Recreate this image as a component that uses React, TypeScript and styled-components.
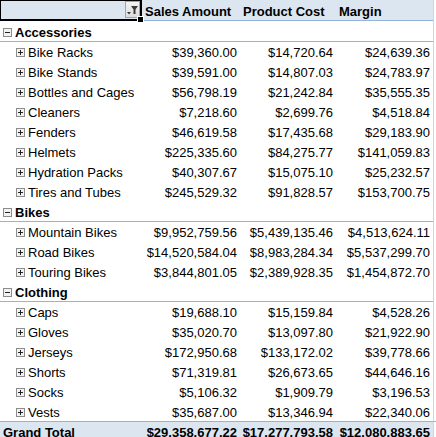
import React from 'react'
import styled, { createGlobalStyle, css } from 'styled-components'

type RowKind = 'category' | 'item'

interface PivotRow {
  kind: RowKind
  label: string
  sales?: string
  cost?: string
  margin?: string
}

const ROWS: PivotRow[] = [
  { kind: 'category', label: 'Accessories' },
  { kind: 'item', label: 'Bike Racks', sales: '$39,360.00', cost: '$14,720.64', margin: '$24,639.36' },
  { kind: 'item', label: 'Bike Stands', sales: '$39,591.00', cost: '$14,807.03', margin: '$24,783.97' },
  { kind: 'item', label: 'Bottles and Cages', sales: '$56,798.19', cost: '$21,242.84', margin: '$35,555.35' },
  { kind: 'item', label: 'Cleaners', sales: '$7,218.60', cost: '$2,699.76', margin: '$4,518.84' },
  { kind: 'item', label: 'Fenders', sales: '$46,619.58', cost: '$17,435.68', margin: '$29,183.90' },
  { kind: 'item', label: 'Helmets', sales: '$225,335.60', cost: '$84,275.77', margin: '$141,059.83' },
  { kind: 'item', label: 'Hydration Packs', sales: '$40,307.67', cost: '$15,075.10', margin: '$25,232.57' },
  { kind: 'item', label: 'Tires and Tubes', sales: '$245,529.32', cost: '$91,828.57', margin: '$153,700.75' },
  { kind: 'category', label: 'Bikes' },
  { kind: 'item', label: 'Mountain Bikes', sales: '$9,952,759.56', cost: '$5,439,135.46', margin: '$4,513,624.11' },
  { kind: 'item', label: 'Road Bikes', sales: '$14,520,584.04', cost: '$8,983,284.34', margin: '$5,537,299.70' },
  { kind: 'item', label: 'Touring Bikes', sales: '$3,844,801.05', cost: '$2,389,928.35', margin: '$1,454,872.70' },
  { kind: 'category', label: 'Clothing' },
  { kind: 'item', label: 'Caps', sales: '$19,688.10', cost: '$15,159.84', margin: '$4,528.26' },
  { kind: 'item', label: 'Gloves', sales: '$35,020.70', cost: '$13,097.80', margin: '$21,922.90' },
  { kind: 'item', label: 'Jerseys', sales: '$172,950.68', cost: '$133,172.02', margin: '$39,778.66' },
  { kind: 'item', label: 'Shorts', sales: '$71,319.81', cost: '$26,673.65', margin: '$44,646.16' },
  { kind: 'item', label: 'Socks', sales: '$5,106.32', cost: '$1,909.79', margin: '$3,196.53' },
  { kind: 'item', label: 'Vests', sales: '$35,687.00', cost: '$13,346.94', margin: '$22,340.06' },
]

const GlobalStyle = createGlobalStyle`
  html, body {
    margin: 0;
    padding: 0;
    background: #ffffff;
    overflow: hidden;
  }
  body {
    font-family: "Liberation Sans", Arial, sans-serif;
    font-size: 13px;
    color: #000000;
  }
`

const Sheet = styled.div`
  width: 436px;
  height: 437px;
  overflow: hidden;
  position: relative;
`

// Excel-ish rows: 20px each, text sits low in the cell
const Row = styled.div<{ $kind: 'header' | RowKind | 'total' }>`
  display: grid;
  grid-template-columns: 142px 98px 96px 97px 3px;
  height: 20px;
  box-sizing: border-box;
  line-height: 17px;

  ${({ $kind }) =>
    $kind === 'header' &&
    css`
      height: 21px;
      font-weight: 700;
    `}
  ${({ $kind }) =>
    ($kind === 'category' || $kind === 'total') &&
    css`
      font-weight: 700;
    `}
`

const Cell = styled.div<{ $align?: 'left' | 'right'; $band?: 'header' | 'category' | 'total' }>`
  position: relative;
  box-sizing: border-box;
  white-space: nowrap;
  text-align: ${({ $align }) => ($align === 'right' ? 'right' : 'left')};
  padding: ${({ $align }) => ($align === 'right' ? '3px 3px 0 0' : '3px 0 0 3px')};

  ${({ $band }) =>
    $band === 'header' &&
    css`
      background: #dce6f1;
      border-bottom: 1px solid #95b3d7;
    `}
  ${({ $band }) =>
    $band === 'category' &&
    css`
      border-bottom: 1px solid #95b3d7;
    `}
  ${({ $band }) =>
    $band === 'total' &&
    css`
      background: #dce6f1;
      border-top: 1px solid #95b3d7;
      padding-top: 2px;
    `}
`

const Edge = styled.div<{ $band?: 'total' }>`
  border-left: 1px solid #d4d4d4;
  box-sizing: border-box;
  ${({ $band }) =>
    $band === 'total' &&
    css`
      border-top: 1px solid #95b3d7;
    `}
`

const SelectedCell = styled.div`
  position: relative;
  box-sizing: border-box;
  background: #dce6f1;
  border: 2px solid #000000;
  border-left-width: 1px;
  border-top-width: 1px;
  height: 21px;
`

const FillHandle = styled.span`
  position: absolute;
  right: -4px;
  bottom: -4px;
  width: 5px;
  height: 5px;
  background: #000000;
  border: 1px solid #ffffff;
  z-index: 2;
`

const FilterButton = styled.span`
  position: absolute;
  right: 0;
  top: 0;
  width: 15px;
  height: 17px;
  box-sizing: border-box;
  border: 1px solid #a5a5a5;
  background: linear-gradient(#f4f4f4, #dcdcdc);
  display: flex;
  align-items: center;
  justify-content: center;
`

const Label = styled.span<{ $indent: number }>`
  display: inline-flex;
  align-items: center;
  padding-left: ${({ $indent }) => $indent}px;
  gap: 2px;
`

const Toggle = styled.span`
  display: inline-flex;
  width: 9px;
  height: 9px;
  margin-right: 1px;
`

const ToggleIcon: React.FC<{ open: boolean }> = ({ open }) => (
  <Toggle>
    <svg width="9" height="9" viewBox="0 0 9 9">
      <rect x="0.5" y="0.5" width="8" height="8" fill="#f2f2f2" stroke="#8c8c8c" />
      <line x1="2" y1="4.5" x2="7" y2="4.5" stroke="#222" />
      {!open && <line x1="4.5" y1="2" x2="4.5" y2="7" stroke="#222" />}
    </svg>
  </Toggle>
)

const FilterIcon: React.FC = () => (
  <svg width="13" height="12" viewBox="0 0 13 12">
    <path d="M5 2h7L9.5 5.5V10h-2V5.5z" fill="#3b3b3b" />
    <path d="M1 8h4l-2 2.5z" fill="#3b3b3b" />
  </svg>
)

const App: React.FC = () => {
  return (
    <Sheet>
      <GlobalStyle />
      <Row $kind="header">
        <SelectedCell>
          <FilterButton>
            <FilterIcon />
          </FilterButton>
          <FillHandle />
        </SelectedCell>
        <Cell $band="header">Sales Amount</Cell>
        <Cell $band="header">Product Cost</Cell>
        <Cell $band="header">Margin</Cell>
        <Edge />
      </Row>

      {ROWS.map((row) =>
        row.kind === 'category' ? (
          <Row $kind="category" key={row.label}>
            <Cell $band="category">
              <Label $indent={0}>
                <ToggleIcon open />
                {row.label}
              </Label>
            </Cell>
            <Cell $band="category" />
            <Cell $band="category" />
            <Cell $band="category" />
            <Edge />
          </Row>
        ) : (
          <Row $kind="item" key={row.label}>
            <Cell>
              <Label $indent={13}>
                <ToggleIcon open={false} />
                {row.label}
              </Label>
            </Cell>
            <Cell $align="right">{row.sales}</Cell>
            <Cell $align="right">{row.cost}</Cell>
            <Cell $align="right">{row.margin}</Cell>
            <Edge />
          </Row>
        )
      )}

      <Row $kind="total">
        <Cell $band="total">Grand Total</Cell>
        <Cell $band="total" $align="right">$29.358.677.22</Cell>
        <Cell $band="total" $align="right">$17.277.793.58</Cell>
        <Cell $band="total" $align="right">$12.080.883.65</Cell>
        <Edge $band="total" />
      </Row>
    </Sheet>
  )
}

export default App
